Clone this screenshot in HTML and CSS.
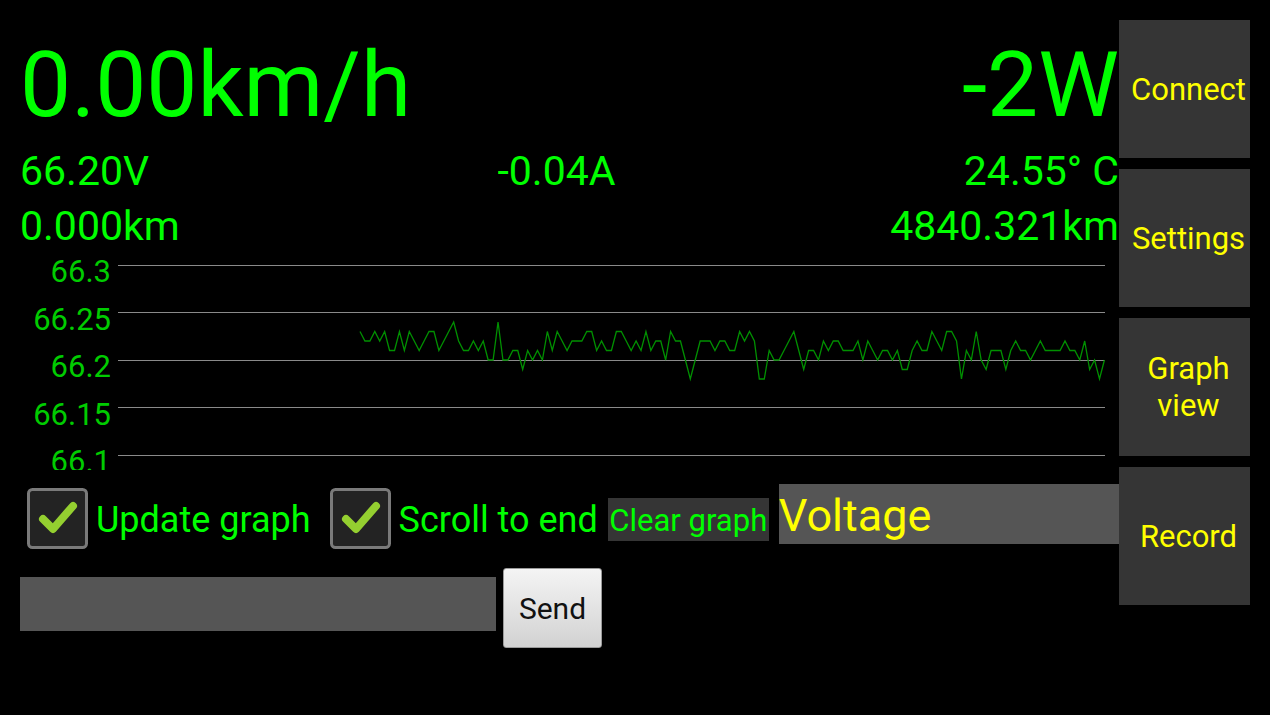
FILE: index.html
```html
<!DOCTYPE html>
<html lang="en">
<head>
    <meta charset="UTF-8">
    <title>Scooter Monitor</title>
    <link rel="stylesheet" href="styles.css">
</head>
<body>
    <div class="screen">
        <div class="main">
            <div class="row big">
                <span>0.00km/h</span>
                <span>-2W</span>
            </div>
            <div class="row stats">
                <span>66.20V</span>
                <span>-0.04A</span>
                <span>24.55° C</span>
            </div>
            <div class="row stats">
                <span>0.000km</span>
                <span>4840.321km</span>
            </div>

            <!-- voltage graph -->
            <svg class="graph" viewBox="0 0 1099 217" width="1099" height="217">
                <g class="grid">
                    <line x1="98" x2="1085" y1="12.5" y2="12.5"/>
                    <line x1="98" x2="1085" y1="59.5" y2="59.5"/>
                    <line x1="98" x2="1085" y1="107.5" y2="107.5"/>
                    <line x1="98" x2="1085" y1="154.5" y2="154.5"/>
                    <line x1="98" x2="1085" y1="202.5" y2="202.5"/>
                </g>
                <g class="axis">
                    <text x="91" y="29">66.3</text>
                    <text x="91" y="77">66.25</text>
                    <text x="91" y="124">66.2</text>
                    <text x="91" y="172">66.15</text>
                    <text x="91" y="219">66.1</text>
                </g>
                <polyline class="series" transform="translate(340 12) scale(4.93 9.5)" vector-effect="non-scaling-stroke"
                    points="0,7 1,8 2,8 3,7 4,8 5,7 6,9 7,9 8,7 9,9 10,7 11,8 12,9 13,8 14,7 15,7 16,9 17,8 18,7 19,6 20,8 21,9 22,9 23,8 24,9 25,8 26,10 27,10 28,6 29,10 30,10 31,9 32,9 33,11 34,9 35,10 36,9 37,10 38,7 39,9 40,7 41,8 42,9 43,8 44,8 45,8 46,7 47,7 48,9 49,8 50,9
                    51,9 52,7 53,7 54,8 55,9 56,8 57,9 58,7 59,9 60,8 61,8 62,10 63,7 64,8 65,8 66,10 67,12 68,10 69,8 70,8 71,8 72,9 73,8 74,8 75,9 76,9 77,7 78,8 79,7 80,8 81,12 82,12 83,9 84,10 85,10 86,9 87,8 88,7 89,9 90,11 91,9 92,9 93,10 94,8 95,9 96,8 97,8 98,9 99,9 100,9 101,8
                    102,10 103,8 104,9 105,10 106,9 107,9 108,10 109,9 110,11 111,11 112,9 113,8 114,9 115,9 116,7 117,8 118,9 119,7 120,7 121,8 122,12 123,9 124,10 125,7 126,10 127,11 128,9 129,9 130,9 131,11 132,9 133,8 134,9 135,9 136,10 137,9 138,8 139,9 140,9 141,9 142,9 143,8 144,9 145,9 146,10 147,8 148,11 149,10 150,12 151,10"/>
            </svg>

            <div class="controls">
                <label class="check first">
                    <svg class="box" width="61" height="61" viewBox="0 0 61 61">
                        <rect x="1.5" y="1.5" width="58" height="58" rx="4"/>
                        <polyline points="16,31 26,41 46,18"/>
                    </svg>
                    <span>Update graph</span>
                </label>
                <label class="check">
                    <svg class="box" width="61" height="61" viewBox="0 0 61 61">
                        <rect x="1.5" y="1.5" width="58" height="58" rx="4"/>
                        <polyline points="16,31 26,41 46,18"/>
                    </svg>
                    <span>Scroll to end</span>
                </label>
                <button class="clear">Clear graph</button>
                <div class="spinner">Voltage</div>
            </div>

            <div class="send-row">
                <input class="cmd" type="text">
                <button class="send">Send</button>
            </div>
        </div>

        <div class="side">
            <button class="side-btn">Connect</button>
            <button class="side-btn">Settings</button>
            <button class="side-btn">Graph<br>view</button>
            <button class="side-btn">Record</button>
        </div>
    </div>
</body>
</html>
```

FILE: styles.css
```css
body {
    margin: 0;
    background-color: #000;
    font-family: Roboto, "Noto Sans", sans-serif;
    color: #00ff00;
    overflow: hidden;
}

.screen {
    display: flex;
    padding: 20px 20px 0 20px;
}

.main {
    width: 1099px;
}

.row {
    display: flex;
    justify-content: space-between;
    white-space: nowrap;
}

.big {
    margin-top: 10px;
    font-size: 91px;
    line-height: 110px;
}

.stats {
    margin-top: 7px;
    font-size: 41px;
    line-height: 48px;
}

.graph {
    display: block;
    margin-top: 3px;
}

.grid line {
    stroke: #8a8a8a;
    stroke-width: 1;
    shape-rendering: crispEdges;
}

.axis text {
    fill: #00cc00;
    font-size: 31px;
    text-anchor: end;
}

.series {
    fill: none;
    stroke: #009000;
    stroke-width: 1.3;
    stroke-linejoin: miter;
}

.controls {
    display: flex;
    align-items: flex-start;
    margin-top: 14px;
    height: 65px;
}

.check {
    display: flex;
    align-items: flex-start;
    margin-left: 19px;
}

.check.first {
    margin-left: 7px;
}

.check .box {
    margin-top: 4px;
}

.box rect {
    fill: #232323;
    stroke: #7a7a7a;
    stroke-width: 3;
}

.box polyline {
    fill: none;
    stroke: #94cf30;
    stroke-width: 8;
    stroke-linecap: round;
    stroke-linejoin: round;
}

.check span {
    margin-left: 8px;
    margin-top: 14px;
    font-size: 36px;
    line-height: 44px;
    white-space: nowrap;
}

.clear {
    margin: 14px 0 0 10px;
    width: 161px;
    height: 43px;
    padding: 2px 0 0 0;
    border: none;
    background-color: #353535;
    color: #00ff00;
    font-family: inherit;
    font-size: 31px;
    line-height: 41px;
    white-space: nowrap;
}

.spinner {
    flex: 1;
    margin-left: 10px;
    height: 57px;
    padding: 3px 0 0 0;
    background-color: #555;
    color: #ffff00;
    font-size: 45px;
    line-height: 57px;
}

.send-row {
    display: flex;
    align-items: flex-start;
    margin-top: 19px;
}

.cmd {
    margin-top: 9px;
    width: 476px;
    height: 54px;
    padding: 0;
    border: none;
    background-color: #555;
}

.send {
    margin-left: 7px;
    width: 99px;
    height: 80px;
    border: 1px solid #9a9a9a;
    border-radius: 3px;
    background: linear-gradient(#f4f4f4, #d2d2d2);
    color: #111;
    font-family: inherit;
    font-size: 30px;
}

.side {
    display: flex;
    flex-direction: column;
    gap: 11px;
    width: 131px;
}

.side-btn {
    height: 138px;
    border: none;
    background-color: #353535;
    color: #ffff00;
    font-family: inherit;
    font-size: 31px;
    line-height: 37px;
    padding: 0 0 0 8px;
}
```
